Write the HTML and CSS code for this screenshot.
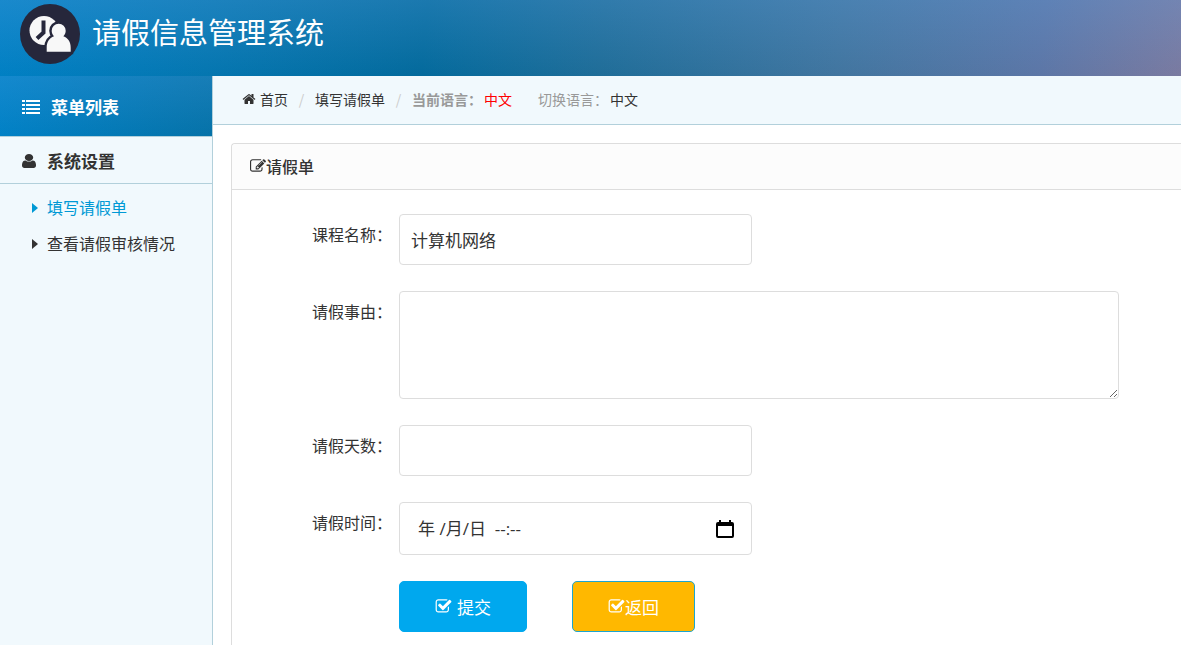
FILE: index.html
```html
<!DOCTYPE html>
<html lang="zh-CN">
<head>
<meta charset="utf-8">
<meta name="viewport" content="width=device-width, initial-scale=1">
<title>请假信息管理系统</title>
<link rel="stylesheet" href="styles.css">
</head>
<body>
<svg class="sprite" aria-hidden="true">
  <symbol id="i-list" viewBox="0 0 18 14"><path d="M0 0h3v2H0zM4 0h14v2H4zM0 4h3v2H0zM4 4h14v2H4zM0 8h3v2H0zM4 8h14v2H4zM0 12h3v2H0zM4 12h14v2H4z"/></symbol>
  <symbol id="i-home" viewBox="0 0 1792 1792"><path d="M1472 992v480q0 26-19 45t-45 19h-384v-384h-256v384h-384q-26 0-45-19t-19-45v-480q0-1 .5-3t.5-3l575-474 575 474q1 2 1 6zm223-69l-62 74q-8 9-21 11h-3q-13 0-21-7l-692-577-692 577q-12 8-24 7-13-2-21-11l-62-74q-8-10-7-23.500t11-21.500l719-599q32-26 76-26t76 26l244 204v-195q0-14 9-23t23-9h192q14 0 23 9t9 23v408l219 182q10 8 11 21.500t-7 23.500z"/></symbol>
  <symbol id="i-user" viewBox="0 0 1280 1536" preserveAspectRatio="none"><path d="M1280 1271q0 109-62.500 187t-150.500 78h-854q-88 0-150.500-78t-62.500-187q0-85 8.500-160.500t31.500-152 58.500-131 94-89 134.500-34.500q131 128 313 128t313-128q76 0 134.500 34.500t94 89 58.500 131 31.500 152 8.500 160.500zm-256-887q0 159-112.500 271.500t-271.500 112.500-271.500-112.500-112.500-271.500 112.500-271.500 271.500-112.500 271.500 112.500 112.500 271.500z"/></symbol>
  <symbol id="i-caret" viewBox="0 0 6 10"><path d="M0 0L6 5L0 10z"/></symbol>
  <symbol id="i-edit" viewBox="0 0 1792 1792"><path d="M888 1184l116-116-152-152-116 116v56h96v96h56zm440-720q-16-16-33 1l-350 350q-17 17-1 33t33-1l350-350q17-17 1-33zm80 594v190q0 119-84.500 203.500t-203.500 84.500h-832q-119 0-203.500-84.500t-84.500-203.500v-832q0-119 84.500-203.500t203.500-84.500h832q63 0 117 25 15 7 18 23 3 17-9 29l-49 49q-14 14-32 8-23-6-45-6h-832q-66 0-113 47t-47 113v832q0 66 47 113t113 47h832q66 0 113-47t47-113v-126q0-13 9-22l64-64q15-15 35-7t20 29zm-96-738l288 288-672 672h-288v-288zm444 132l-92 92-288-288 92-92q28-28 68-28t68 28l152 152q28 28 28 68t-28 68z"/></symbol>
  <symbol id="i-check" viewBox="0 0 1792 1792"><path d="M1472 930v318q0 119-84.500 203.500t-203.500 84.500h-832q-119 0-203.500-84.500t-84.500-203.500v-832q0-119 84.500-203.500t203.500-84.500h832q63 0 117 25 15 7 18 23 3 17-9 29l-49 49q-10 10-23 10-3 0-9-2-23-6-45-6h-832q-66 0-113 47t-47 113v832q0 66 47 113t113 47h832q66 0 113-47t47-113v-254q0-13 9-22l64-64q10-10 23-10 6 0 12 3 20 8 20 29zm231-489l-814 814q-24 24-57 24t-57-24l-430-430q-24-24-24-57t24-57l110-110q24-24 57-24t57 24l263 263 647-647q24-24 57-24t57 24l110 110q24 24 24 57t-24 57z"/></symbol>
  <symbol id="i-calendar" viewBox="0 0 18 20"><path fill-rule="evenodd" d="M3 1h2v2h8V1h2v2h1q2 0 2 2v12q0 2-2 2H2q-2 0-2-2V5q0-2 2-2h1zM2 7v10h14V7z"/></symbol>
</svg>

<header class="topbar">
  <svg class="logo" viewBox="0 0 60 60" role="img" aria-label="logo">
    <circle cx="30" cy="30" r="30" fill="#26273b"/>
    <circle cx="24" cy="26.500" r="14.500" fill="#f8f8f8"/>
    <path d="M23.500 16.500v12L17 34.500" fill="none" stroke="#26273b" stroke-width="4"/>
    <path d="M26.700 47.700v-4c0-6 2.500-9.500 7.300-11.500-1.500-1.500-2.300-3.500-2.300-5.500a7 7 0 0 1 14 0c0 2-.8 4-2.300 5.500 4.800 2 7.300 5.500 7.300 11.500v4z" fill="#f8f8f8" stroke="#26273b" stroke-width="5" paint-order="stroke"/>
  </svg>
  <h1 class="title">请假信息管理系统</h1>
</header>

<div class="shell">
  <nav class="sidebar" aria-label="菜单列表">
    <h2 class="menu-head"><svg class="icon icon-list"><use href="#i-list"/></svg>菜单列表</h2>
    <h3 class="menu-group"><svg class="icon icon-user"><use href="#i-user"/></svg>系统设置</h3>
    <ul class="menu">
      <li><a class="menu-link active" href="#"><svg class="caret"><use href="#i-caret"/></svg><span>填写请假单</span></a></li>
      <li><a class="menu-link" href="#"><svg class="caret"><use href="#i-caret"/></svg><span>查看请假审核情况</span></a></li>
    </ul>
  </nav>

  <main class="main">
    <div class="crumbs">
      <a class="crumb" href="#"><svg class="icon icon-home"><use href="#i-home"/></svg>首页</a>
      <span class="slash">/</span>
      <a class="crumb" href="#">填写请假单</a>
      <span class="slash">/</span>
      <span class="muted"><b>当前语言：</b><span class="red">中文</span></span>
      <span class="muted switch">切换语言：<a class="crumb" href="#">中文</a></span>
    </div>

    <section class="panel">
      <h2 class="panel-head"><svg class="icon icon-edit"><use href="#i-edit"/></svg>请假单</h2>
      <form class="form">
        <div class="row">
          <label class="label" for="course">课程名称：</label>
          <input class="field" id="course" type="text" value="计算机网络">
        </div>
        <div class="row">
          <label class="label" for="reason">请假事由：</label>
          <textarea class="field area" id="reason"></textarea>
        </div>
        <div class="row">
          <label class="label" for="days">请假天数：</label>
          <input class="field" id="days" type="text">
        </div>
        <div class="row">
          <label class="label" for="time">请假时间：</label>
          <div class="field date">
            <input class="date-input" id="time" type="text" value="年 /月/日 &nbsp;--:--">
            <button class="date-button" type="button" aria-label="选择日期"><svg class="icon-calendar"><use href="#i-calendar"/></svg></button>
          </div>
        </div>
        <div class="actions">
          <button class="button submit" type="submit"><svg class="icon icon-check"><use href="#i-check"/></svg>提交</button>
          <button class="button back" type="button"><svg class="icon icon-check"><use href="#i-check"/></svg>返回</button>
        </div>
      </form>
    </section>
  </main>
</div>
</body>
</html>
```
FILE: styles.css
```css
* { box-sizing: border-box; }

body {
  margin: 0;
  min-height: 100vh;
  display: flex;
  flex-direction: column;
  overflow: hidden;
  font-family: "Noto Sans CJK SC", sans-serif;
  font-size: 16px;
  line-height: 24px;
  color: #333;
  background: #fff;
}

h1, h2, h3, ul { margin: 0; padding: 0; }
a { color: inherit; text-decoration: none; }
.sprite { display: none; }
.icon { width: 16px; height: 16px; flex: none; fill: currentColor; }

.topbar {
  height: 76px;
  flex: none;
  display: flex;
  align-items: flex-start;
  gap: 12px;
  padding: 4px 20px;
  background:
    linear-gradient(180deg, rgba(100, 165, 230, 0.25), rgba(100, 165, 230, 0)),
    linear-gradient(96deg, #0080c4 0%, #0476b0 18%, #036a9c 36%, #1f6d98 51%, #41759f 71%, #5c76a6 88%, #7a7aa0 100%);
}
.logo { width: 60px; height: 60px; flex: none; }
.title {
  font-size: 29px;
  font-weight: 400;
  line-height: 54px;
  color: #fff;
}

.shell { flex: 1; display: flex; }
.sidebar {
  width: 213px;
  flex: none;
  background: #f1f9fd;
  border-right: 1px solid #b2d0db;
}
.menu-head {
  display: flex;
  align-items: center;
  gap: 11px;
  height: 60px;
  padding: 2px 22px 0;
  font-size: 17px;
  color: #fff;
  background:
    linear-gradient(180deg, rgba(100, 165, 230, 0.2), rgba(100, 165, 230, 0)),
    linear-gradient(110deg, #0082c8, #0572a8);
}
.icon-list { width: 18px; height: 14px; }
.menu-group {
  display: flex;
  align-items: center;
  gap: 11px;
  height: 48px;
  padding: 1px 22px 0;
  font-size: 17px;
  border-top: 1px solid #b2d0db;
  border-bottom: 1px solid #b2d0db;
}
.icon-user { width: 14px; height: 14px; }
.menu { list-style: none; padding-top: 6px; }
.menu-link {
  display: flex;
  align-items: center;
  gap: 9px;
  height: 36px;
  padding-left: 32px;
}
.menu-link span { padding-bottom: 2px; }
.menu-link.active { color: #0099d5; }
.caret { width: 6px; height: 10px; fill: currentColor; }

.main { flex: 1; min-width: 0; }
.crumbs {
  display: flex;
  align-items: center;
  height: 49px;
  padding: 0 0 2px 29px;
  font-size: 14px;
  background: #f1f9fd;
  border-bottom: 1px solid #b2d0db;
}
.crumb { display: inline-flex; align-items: center; gap: 4px; color: #333; }
.icon-home { width: 14px; height: 14px; }
.slash { width: 27px; text-align: center; color: #ccc; }
.muted { color: #999; }
.red { margin-left: 2px; color: #f00; }
.switch { margin-left: 26px; }
.switch .crumb { margin-left: 2px; }

.panel {
  margin: 18px 0 0 18px;
  border: 1px solid #ddd;
  border-right: 0;
  border-bottom: 0;
  border-radius: 4px 0 0 0;
}
.panel-head {
  display: flex;
  align-items: center;
  height: 46px;
  padding: 0 18px 1px;
  font-size: 16px;
  font-weight: 500;
  background: #fcfcfc;
  border-bottom: 1px solid #ddd;
  border-radius: 4px 0 0 0;
}

.form {
  display: flex;
  flex-direction: column;
  gap: 26px;
  padding: 24px 62px 13px 80px;
}
.row { display: flex; align-items: flex-start; gap: 7px; }
.label { width: 80px; flex: none; padding-top: 8px; white-space: nowrap; }
.field {
  width: 353px;
  height: 51px;
  padding: 12px 11px;
  font: inherit;
  font-size: 17px;
  color: #333;
  background: #fff;
  border: 1px solid #ddd;
  border-radius: 4px;
}
.area { display: block; flex: 1; height: 108px; resize: vertical; }
.date { display: flex; align-items: center; height: 53px; padding: 0 17px 0 18px; }
.date-input {
  flex: 1;
  min-width: 0;
  padding: 0;
  border: 0;
  font: inherit;
  font-family: "Open Sans", "Noto Sans CJK SC", sans-serif;
  color: inherit;
  background: none;
}
.date-button { display: flex; padding: 0; border: 0; background: none; color: #000; }
.icon-calendar { width: 18px; height: 20px; fill: currentColor; }

.actions { display: flex; gap: 45px; padding-left: 87px; }
.button {
  display: flex;
  align-items: center;
  justify-content: center;
  height: 51px;
  padding: 0 35px;
  font: inherit;
  font-size: 17px;
  color: #fff;
  border: 1px solid #00a8ee;
  border-radius: 5px;
}
.submit { gap: 5px; background: #00a8ee; }
.back { background: #ffb800; border-color: #1ba5cf; }
.icon-check { width: 17px; height: 17px; }
```
